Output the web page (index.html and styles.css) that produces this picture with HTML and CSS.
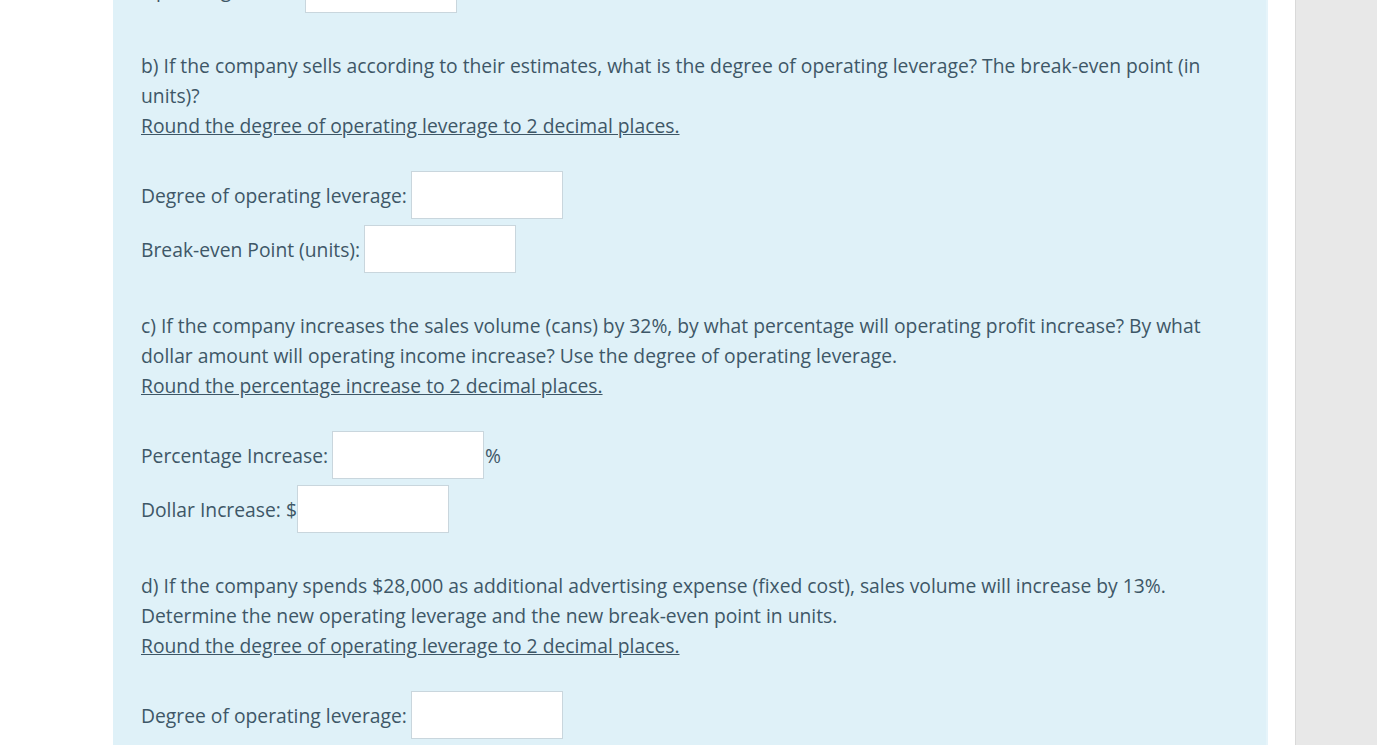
FILE: index.html
```html
<!DOCTYPE html>
<html>
<head>
<meta charset="utf-8">
<link rel="stylesheet" href="styles.css">
</head>
<body>
<div class="page">
  <div class="gutter"></div>
  <main class="panel">
    <div class="row top-row">
      <span class="label">Operating Income:</span>
      <span class="box"></span>
    </div>

    <section class="q">
      <p class="text">b) If the company sells according to their estimates, what is the degree of operating leverage? The break-even point (in units)?</p>
      <p class="text"><a class="hint">Round the degree of operating leverage to 2 decimal places.</a></p>
    </section>
    <div class="rows">
      <div class="row"><span class="label">Degree of operating leverage:</span><span class="box"></span></div>
      <div class="row"><span class="label">Break-even Point (units):</span><span class="box"></span></div>
    </div>

    <section class="q">
      <p class="text">c) If the company increases the sales volume (cans) by 32%, by what percentage will operating profit increase? By what dollar amount will operating income increase? Use the degree of operating leverage.</p>
      <p class="text"><a class="hint">Round the percentage increase to 2 decimal places.</a></p>
    </section>
    <div class="rows">
      <div class="row"><span class="label">Percentage Increase:</span><span class="box"></span><span class="unit">%</span></div>
      <div class="row"><span class="label">Dollar Increase: $</span><span class="box tight"></span></div>
    </div>

    <section class="q">
      <p class="text">d) If the company spends $28,000 as additional advertising expense (fixed cost), sales volume will increase by 13%. Determine the new operating leverage and the new break-even point in units.</p>
      <p class="text"><a class="hint">Round the degree of operating leverage to 2 decimal places.</a></p>
    </section>
    <div class="rows">
      <div class="row"><span class="label">Degree of operating leverage:</span><span class="box"></span></div>
      <div class="row"><span class="label">Break-even Point (units):</span><span class="box"></span></div>
    </div>
  </main>
  <div class="spacer"></div>
  <aside class="side"></aside>
</div>
</body>
</html>
```

FILE: styles.css
```css
html, body {
  margin: 0;
  padding: 0;
  height: 100%;
  overflow: hidden;
  background: #ffffff;
}
.page {
  display: flex;
  height: 745px;
  font-family: "Open Sans", "Noto Sans", sans-serif;
  font-size: 19.3px;
  color: #3e5767;
}
.gutter {
  width: 113px;
  flex: none;
}
.panel {
  width: 1155px;
  flex: none;
  background: #dff1f8;
  border-right: 2px solid #e6f4fa;
  padding: 0 47px 0 28px;
  box-sizing: border-box;
  overflow: hidden;
}
.spacer {
  width: 27px;
  flex: none;
}
.side {
  flex: 1;
  background: #e8e8e8;
  border-left: 1px solid #d9d9d9;
}
.row {
  display: flex;
  align-items: center;
  height: 48px;
}
.top-row {
  margin-top: -35px;
}
.rows {
  display: flex;
  flex-direction: column;
  gap: 6px;
}
.label {
  white-space: nowrap;
  margin-right: 4px;
}
.top-row .label {
  margin-right: -3px;
}
.box {
  width: 150px;
  height: 46px;
  background: #ffffff;
  border: 1px solid #c9d6dd;
  flex: none;
}
.box.tight {
  margin-left: -4px;
}
.unit {
  margin-left: 1px;
}
.q {
  margin: 38px 0 30px;
}
.text {
  margin: 0;
  line-height: 30px;
}
.hint {
  text-decoration: underline;
  color: #3e5767;
}
```
